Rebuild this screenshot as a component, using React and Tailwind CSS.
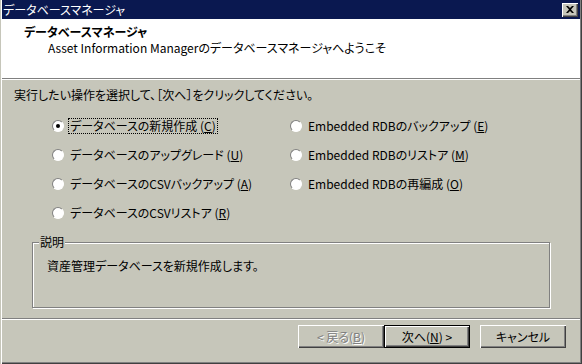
import React from 'react';

const font = { fontFamily: '"MS UI Gothic", "Noto Sans CJK JP", sans-serif' };

function Radio({ checked, label, mnemonic, focused }) {
  return (
    <div className="flex h-[16px] items-center gap-[4px]">
      <span className="relative inline-flex h-[12px] w-[12px] shrink-0 items-center justify-center rounded-full border border-t-[#808080] border-l-[#808080] border-r-white border-b-white bg-white">
        {checked && <span className="h-[4px] w-[4px] rounded-full bg-black" />}
      </span>
      <span className={focused ? 'border border-dotted border-black px-[1px] leading-[14px]' : 'px-[2px] leading-[14px]'}>
        {label} (<span className="underline">{mnemonic}</span>)
      </span>
    </div>
  );
}

function Button({ children, disabled, primary }) {
  return (
    <button
      type="button"
      className={
        'flex h-[23px] w-[86px] items-center justify-center text-[12px] ' +
        (primary
          ? 'border border-black shadow-[inset_1px_1px_0_#fff,inset_-1px_-1px_0_#404040,inset_-2px_-2px_0_#808080]'
          : 'shadow-[inset_1px_1px_0_#fff,inset_-1px_-1px_0_#404040,inset_-2px_-2px_0_#808080]') +
        (disabled ? ' text-[#808080] [text-shadow:1px_1px_0_#fff]' : ' text-black')
      }
    >
      {children}
    </button>
  );
}

export default function App() {
  const left = [
    { label: 'データベースの新規作成', mnemonic: 'C', checked: true },
    { label: 'データベースのアップグレード', mnemonic: 'U' },
    { label: 'データベースのCSVバックアップ', mnemonic: 'A' },
    { label: 'データベースのCSVリストア', mnemonic: 'R' },
  ];
  const right = [
    { label: 'Embedded RDBのバックアップ', mnemonic: 'E' },
    { label: 'Embedded RDBのリストア', mnemonic: 'M' },
    { label: 'Embedded RDBの再編成', mnemonic: 'O' },
  ];

  return (
    <div
      style={font}
      className="flex h-[364px] w-[582px] flex-col bg-[#c6c6ba] text-[12px] text-black [font-feature-settings:'palt'] shadow-[inset_1px_0_0_#c6c6ba,inset_2px_0_0_#fff,inset_-1px_-1px_0_#404040,inset_-2px_-2px_0_#808080]"
    >
      <div className="ml-[2px] mr-[2px] flex h-[19px] items-center justify-between bg-[#0a1850] pl-[1px] pr-[2px]">
        <span className="text-[12px] leading-[14px] text-white">データベースマネージャ</span>
        <span className="flex h-[14px] w-[16px] items-center justify-center bg-[#c6c6ba] shadow-[inset_1px_1px_0_#fff,inset_-1px_-1px_0_#404040,inset_-2px_-2px_0_#808080]">
          <svg width="8" height="7" viewBox="0 0 8 7">
            <path d="M0 0h2l2 2 2-2h2L5 3.5 8 7H6L4 5 2 7H0l3-3.5z" fill="#000" />
          </svg>
        </span>
      </div>
      <div className="mx-[2px] flex h-[59px] flex-col bg-white pl-[22px] pt-[5px]">
        <div className="text-[12px] font-bold leading-[16px]">データベースマネージャ</div>
        <div className="pl-[24px] text-[12px] leading-[16px]">Asset Information Managerのデータベースマネージャへようこそ</div>
      </div>
      <div className="mx-[2px] h-[1px] bg-[#808080]" />
      <div className="mx-[2px] h-[1px] bg-white" />
      <div className="flex flex-1 flex-col px-[14px] pt-[8px]">
        <div className="leading-[14px]">実行したい操作を選択して、［次へ］をクリックしてください。</div>
        <div className="mt-[16px] flex pl-[38px]">
          <div className="flex w-[238px] flex-col gap-[13px]">
            {left.map((r, i) => (
              <Radio key={r.mnemonic} {...r} focused={i === 0} />
            ))}
          </div>
          <div className="flex flex-col gap-[13px]">
            {right.map((r) => (
              <Radio key={r.mnemonic} {...r} />
            ))}
          </div>
        </div>
        <div className="relative mx-[18px] mt-[21px] h-[66px] border border-[#808080] shadow-[1px_1px_0_#fff,inset_1px_1px_0_#fff]">
          <span className="absolute left-[6px] top-[-8px] bg-[#c6c6ba] px-[1px] leading-[14px]">説明</span>
          <div className="pl-[14px] pt-[16px] leading-[14px]">資産管理データベースを新規作成します。</div>
        </div>
      </div>
      <div className="mx-[2px] h-[1px] bg-[#808080]" />
      <div className="mx-[2px] h-[1px] bg-white" />
      <div className="flex h-[44px] items-start justify-end pr-[16px] pt-[5px]">
        <Button disabled>&lt; 戻る(<span className="underline">B</span>)</Button>
        <Button primary>次へ(<span className="underline">N</span>) &gt;</Button>
        <div className="w-[10px]" />
        <Button>キャンセル</Button>
      </div>
    </div>
  );
}
